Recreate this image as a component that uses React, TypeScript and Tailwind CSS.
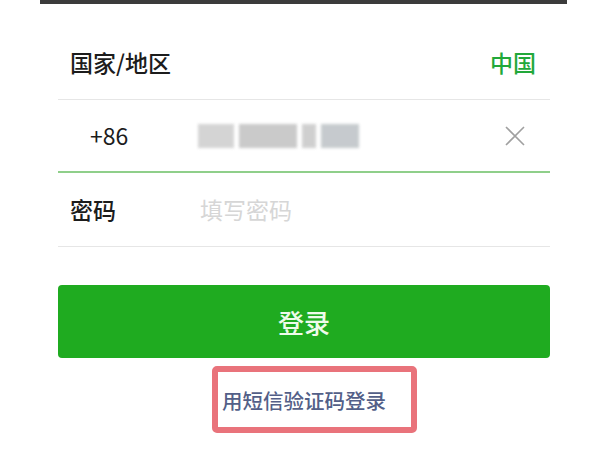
import React from "react";

const font = { fontFamily: '"Noto Sans CJK SC", "Noto Sans", sans-serif' };

export default function App() {
  return (
    <div className="w-[600px] h-[450px] bg-white overflow-hidden" style={font}>
      <div className="ml-[40px] w-[527px] h-[4px] bg-[#3b3b3b]" />
      <div className="ml-[58px] w-[492px] mt-[26px]">
        <div className="h-[70px] flex items-center justify-between border-b border-[#e6e6e6] pl-[12px] pr-[14px] pb-[4px]">
          <span className="text-[23px] font-medium text-[#1c1c1c]">国家/地区</span>
          <span className="text-[23px] font-medium text-[#22a83a]">中国</span>
        </div>
        <div className="h-[73px] flex items-center border-b-2 border-[#8fcf8a]">
          <span className="ml-[32px] w-[108px] text-[23px] text-[#1c1c1c]">+86</span>
          <div className="flex items-center gap-[5px] blur-[1.5px] opacity-80">
            <div className="w-[36px] h-[24px] bg-[#cacaca]" />
            <div className="w-[58px] h-[24px] bg-[#bdbdbd]" />
            <div className="w-[14px] h-[24px] bg-[#c4c4c4]" />
            <div className="w-[38px] h-[24px] bg-[#b8bec2]" />
          </div>
          <div className="ml-auto mr-[24px] w-[22px] h-[22px]">
            <svg width="22" height="22" viewBox="0 0 22 22">
              <path d="M2 2 L20 20 M20 2 L2 20" stroke="#a0a0a0" strokeWidth="1.6" fill="none" />
            </svg>
          </div>
        </div>
        <div className="h-[74px] flex items-center border-b border-[#e6e6e6]">
          <span className="ml-[12px] w-[130px] text-[23px] font-medium text-[#1c1c1c]">密码</span>
          <span className="text-[23px] text-[#d6d6d6]">填写密码</span>
        </div>
        <div className="mt-[38px] h-[73px] rounded-[4px] bg-[#1fab20] flex items-center justify-center">
          <span className="text-[26px] font-medium text-[#eefbea]">登录</span>
        </div>
        <div className="mt-[8px] ml-[154px] w-[205px] h-[67px] border-[6px] border-[#e9737b] rounded-[5px] flex items-center pl-[4px] pt-[2px]">
          <span className="text-[20.5px] font-medium text-[#535f88]">用短信验证码登录</span>
        </div>
      </div>
    </div>
  );
}
